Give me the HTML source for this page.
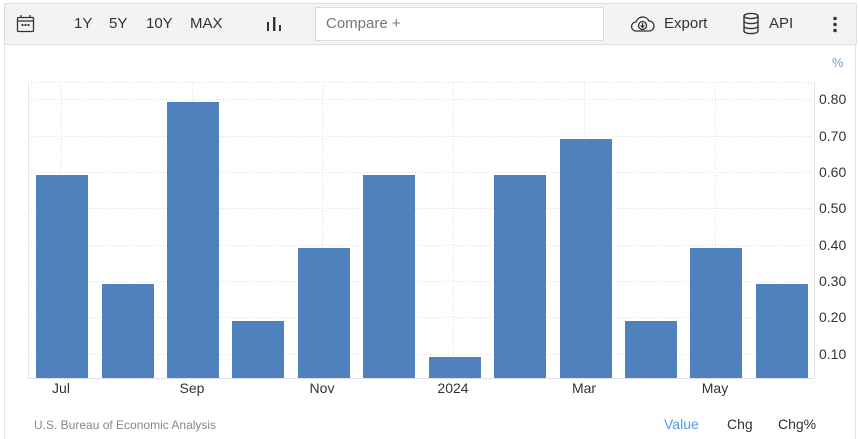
<!DOCTYPE html><html><head><style>
body{margin:0;width:858px;height:439px;background:#fff;font-family:"Liberation Sans",sans-serif;position:relative;overflow:hidden}
.a{position:absolute}
.tb{left:4px;top:3px;width:851px;height:40px;background:#f3f3f3;border:1px solid #ddd}
.t{font-size:15px;color:#333;top:15px}
.yl{font-size:14px;color:#333;left:819px}
.xl{font-size:14px;color:#333;top:380px;transform:translateX(-50%)}
.bar{position:absolute;background:#4f81bd;width:52px;bottom:61px}
</style></head><body>
<div class="a" style="left:4px;top:3px;width:1px;height:436px;background:#e5e5e5"></div>
<div class="a" style="left:855px;top:3px;width:1px;height:436px;background:#e5e5e5"></div>
<div class="a tb"></div>
<svg class="a" style="left:16px;top:14px" width="20" height="20" viewBox="0 0 20 20" fill="none" stroke="#333" stroke-width="1.3"><rect x="1.5" y="3.5" width="16" height="14" rx="1"/><line x1="1.5" y1="7" x2="17.5" y2="7"/><line x1="5" y1="1" x2="5" y2="4"/><line x1="14" y1="1" x2="14" y2="4"/><circle cx="6.5" cy="11" r=".5"/><circle cx="9.5" cy="11" r=".5"/><circle cx="12.5" cy="11" r=".5"/></svg>
<div class="a t" style="left:74px">1Y</div>
<div class="a t" style="left:109px">5Y</div>
<div class="a t" style="left:146px">10Y</div>
<div class="a t" style="left:190px">MAX</div>
<svg class="a" style="left:266px;top:16px" width="16" height="16"><rect x="1" y="6" width="2" height="9" fill="#333"/><rect x="7" y="1" width="2.4" height="14" fill="#333"/><rect x="13" y="9" width="2" height="6" fill="#333"/></svg>
<div class="a" style="left:315px;top:7px;width:287px;height:32px;background:#fff;border:1px solid #ddd"></div>
<div class="a t" style="left:326px;color:#777">Compare +</div>
<svg class="a" style="left:630px;top:14px" width="26" height="20" viewBox="0 0 26 20" fill="none" stroke="#333" stroke-width="1.3"><path d="M6 17H19a5 5 0 0 0 0-10 7 7 0 0 0-13 1 4.5 4.5 0 0 0 0 9z"/><circle cx="12.5" cy="11.5" r="4"/><path d="M12.5 9v4M10.8 11.5l1.7 2 1.7-2"/></svg>
<div class="a t" style="left:664px">Export</div>
<svg class="a" style="left:742px;top:12px" width="18" height="24" viewBox="0 0 18 24" fill="none" stroke="#333" stroke-width="1.4"><ellipse cx="9" cy="4" rx="7" ry="2.6"/><path d="M2 4v15c0 1.5 3 2.6 7 2.6s7-1.1 7-2.6V4M2 9c0 1.5 3 2.6 7 2.6s7-1.1 7-2.6M2 14c0 1.5 3 2.6 7 2.6s7-1.1 7-2.6"/></svg>
<div class="a t" style="left:769px">API</div>
<svg class="a" style="left:832px;top:16px" width="6" height="18"><circle cx="3" cy="2.5" r="1.8" fill="#333"/><circle cx="3" cy="8.5" r="1.8" fill="#333"/><circle cx="3" cy="14.5" r="1.8" fill="#333"/></svg>
<div class="a" style="left:832px;top:55px;font-size:13px;color:#7a9cc7">%</div>
<svg class="a" style="left:0;top:0" width="858" height="439">
<g stroke="#ddd" stroke-dasharray="1,2" stroke-width="1">
<line x1="28" y1="82.5" x2="814" y2="82.5"/>
<line x1="28" y1="99.5" x2="814" y2="99.5"/><line x1="28" y1="136.5" x2="814" y2="136.5"/><line x1="28" y1="172.5" x2="814" y2="172.5"/><line x1="28" y1="208.5" x2="814" y2="208.5"/><line x1="28" y1="245.5" x2="814" y2="245.5"/><line x1="28" y1="281.5" x2="814" y2="281.5"/><line x1="28" y1="317.5" x2="814" y2="317.5"/><line x1="28" y1="354.5" x2="814" y2="354.5"/>
<line x1="61.5" y1="82" x2="61.5" y2="378"/><line x1="192.5" y1="82" x2="192.5" y2="378"/><line x1="322.5" y1="82" x2="322.5" y2="378"/><line x1="453.5" y1="82" x2="453.5" y2="378"/><line x1="584.5" y1="82" x2="584.5" y2="378"/><line x1="715.5" y1="82" x2="715.5" y2="378"/>
</g>
<line x1="28.5" y1="82" x2="28.5" y2="378" stroke="#e6e6e6"/>
<line x1="814.5" y1="82" x2="814.5" y2="378" stroke="#e6e6e6"/>
<line x1="28" y1="378.5" x2="815" y2="378.5" stroke="#e0e0e0"/>
</svg>
<div class="bar" style="left:36px;height:203px"></div>
<div class="bar" style="left:102px;height:94px"></div>
<div class="bar" style="left:167px;height:276px"></div>
<div class="bar" style="left:232px;height:57px"></div>
<div class="bar" style="left:298px;height:130px"></div>
<div class="bar" style="left:363px;height:203px"></div>
<div class="bar" style="left:429px;height:21px"></div>
<div class="bar" style="left:494px;height:203px"></div>
<div class="bar" style="left:560px;height:239px"></div>
<div class="bar" style="left:625px;height:57px"></div>
<div class="bar" style="left:690px;height:130px"></div>
<div class="bar" style="left:756px;height:94px"></div>
<div class="a yl" style="top:91px">0.80</div><div class="a yl" style="top:128px">0.70</div><div class="a yl" style="top:164px">0.60</div><div class="a yl" style="top:200px">0.50</div><div class="a yl" style="top:237px">0.40</div><div class="a yl" style="top:273px">0.30</div><div class="a yl" style="top:309px">0.20</div><div class="a yl" style="top:346px">0.10</div>
<div class="a xl" style="left:61px">Jul</div><div class="a xl" style="left:192px">Sep</div><div class="a xl" style="left:322px">Nov</div><div class="a xl" style="left:453px">2024</div><div class="a xl" style="left:584px">Mar</div><div class="a xl" style="left:715px">May</div>
<div class="a" style="left:34px;top:418px;font-size:12px;color:#888">U.S. Bureau of Economic Analysis</div>
<div class="a" style="left:664px;top:416px;font-size:14px;color:#4a9cf0">Value</div>
<div class="a" style="left:727px;top:416px;font-size:14px;color:#333">Chg</div>
<div class="a" style="left:778px;top:416px;font-size:14px;color:#333">Chg%</div>
</body></html>
